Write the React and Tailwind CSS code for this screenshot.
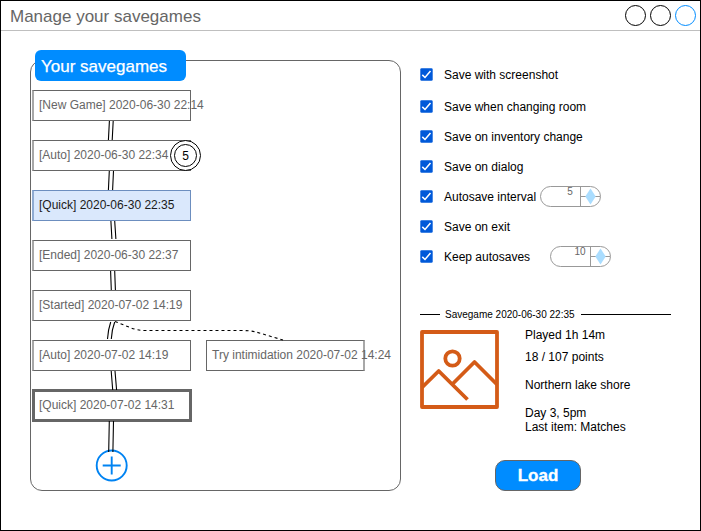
import React from "react";

const rows = [
  { text: "[New Game] 2020-06-30 22:14" },
  { text: "[Auto] 2020-06-30 22:34", badge: "5" },
  { text: "[Quick] 2020-06-30 22:35", kind: "selected" },
  { text: "[Ended] 2020-06-30 22:37" },
  { text: "[Started] 2020-07-02 14:19" },
  { text: "[Auto] 2020-07-02 14:19" },
  { text: "[Quick] 2020-07-02 14:31", kind: "current" },
];

const styles = {
  normal: "h-[31px] w-[159px] border border-l-2 border-y-[#666] border-r-[#666] border-l-[#a8a8a8] pl-[5px] text-[#666]",
  selected: "h-[31px] w-[159px] border border-l-2 border-y-[#6c8ebf] border-r-[#6c8ebf] border-l-[#8fabd2] bg-[#dae8fc] pl-[5px] text-[#1a1a1a]",
  current: "-my-px h-[33px] w-[160px] border-[3px] border-[#666] pl-[4px] text-[#666]",
};

function Save({ text, kind = "normal", badge }) {
  return (
    <div className={"relative flex shrink-0 items-center whitespace-nowrap pb-px text-[12px] " + styles[kind]}>
      {text}
      {badge && (
        <span className="absolute left-[136px] -top-[1px] flex size-[31px] items-center justify-center rounded-full border border-black bg-white text-black">
          <span className="absolute inset-[3px] rounded-full border border-black" />
          {badge}
        </span>
      )}
    </div>
  );
}

function Links() {
  return (
    <svg className="absolute -left-px -top-px h-[431px] w-[371px]" viewBox="30 60 371 431" fill="none" stroke="#000" strokeWidth="1.1">
      <path d="M109.4 121L108.4 140M113.2 121L112.2 140" />
      <path d="M109.3 171L108.4 190M113.5 171L112.6 190" />
      <path d="M110.9 221L111.9 239M114.7 221L115.9 239" />
      <path d="M110.6 271L111.3 290M114.7 271L115.4 290" />
      <path d="M110.7 322Q108 330 107.5 339M114.7 322Q111.7 330 111.3 339" />
      <path d="M111.2 371L112.7 390M115 371L116.6 390" />
      <path d="M109.3 421L108.7 452M113.5 421L112.9 452" />
      <path d="M115 321.5L130 327.5Q137 330.5 146 330.5H241Q250 330.5 256 332L283 340" strokeDasharray="3 3" />
    </svg>
  );
}

function Check() {
  return (
    <svg className="size-[13px] shrink-0" viewBox="0 0 13 13">
      <rect x="0.3" y="0.3" width="12.4" height="12.4" rx="1.3" fill="#0059d9" />
      <path d="M2.3 6.9L5 9.5L10.5 3" fill="none" stroke="#fff" strokeWidth="1.5" />
    </svg>
  );
}

function Spinner({ value, className }) {
  return (
    <div className={"flex h-[21px] w-[61px] overflow-hidden rounded-full border border-[#999] " + className}>
      <span className="flex-1 pl-[19px] text-center text-[10px] leading-[10px] text-[#666]">{value}</span>
      <svg className="h-[19px] w-[20px] shrink-0" viewBox="0 0 20 19">
        <path d="M0.5 0V19M0 9.5H20" stroke="#999" />
        <path d="M10.5 1.5L15.7 9.5L10.5 17.5L5.3 9.5Z" fill="#aaddff" />
      </svg>
    </div>
  );
}

function Option({ label, children, first }) {
  return (
    <div className={"flex items-center text-[12px] text-black " + (first ? "h-[34px]" : "h-[30px]")}>
      <Check />
      <span className="ml-[11px] whitespace-nowrap pt-[2px]">{label}</span>
      {children}
    </div>
  );
}

export default function App() {
  return (
    <div className="flex h-[531px] w-[701px] flex-col border border-black bg-white font-['Liberation_Sans',Arial,sans-serif]">
      <header className="flex h-[30px] shrink-0 items-center border-b border-[#bfbfbf] pl-[9px] pr-[4px] text-[17px] text-[#666]">
        <h1 className="flex-1 pt-[3px]">Manage your savegames</h1>
        <div className="flex gap-[4px]">
          <span className="size-[21px] rounded-full border border-black" />
          <span className="size-[21px] rounded-full border border-black" />
          <span className="size-[21px] rounded-full border border-[#008cff]" />
        </div>
      </header>
      <main className="flex">
        <section className="relative ml-[29px] mt-[29px] h-[431px] w-[371px] rounded-[12px] border border-[#666]">
          <h2 className="absolute left-[4px] -top-[11px] flex h-[31px] w-[151px] items-center rounded-[6px] bg-[#008cff] pl-[6px] pt-[2px] text-[17px] text-white [-webkit-text-stroke:0.25px_white]">
            Your savegames
          </h2>
          <div className="flex flex-col gap-[19px] pl-px pt-[29px]">
            {rows.map((r) => (
              <Save key={r.text} {...r} />
            ))}
          </div>
          <div className="absolute left-[175px] top-[279px] flex h-[31px] w-[159px] items-center whitespace-nowrap border border-r-2 border-y-[#666] border-l-[#666] border-r-[#a8a8a8] pb-px pl-[5px] text-[12px] text-[#666]">
            Try intimidation 2020-07-02 14:24
          </div>
          <svg className="absolute left-[64px] top-[388px] size-[33px]" viewBox="0 0 33 33" fill="none" stroke="#0083f2" strokeWidth="1.9">
            <circle cx="16.7" cy="16.5" r="15" />
            <path d="M16.7 7.5V25.5M7.7 16.5H25.7" />
          </svg>
          <Links />
        </section>
        <section className="ml-[19px] flex flex-col pt-[26px]">
          <div className="flex flex-col">
            <Option label="Save with screenshot" first />
            <Option label="Save when changing room" />
            <Option label="Save on inventory change" />
            <Option label="Save on dialog" />
            <Option label="Autosave interval"><Spinner value="5" className="ml-[4px]" /></Option>
            <Option label="Save on exit" />
            <Option label="Keep autosaves"><Spinner value="10" className="ml-[20px]" /></Option>
          </div>
          <div className="mt-[38px] flex h-[10px] w-[251px] items-center">
            <span className="h-px w-[20px] bg-black" />
            <span className="ml-[5px] mr-[6px] whitespace-nowrap pt-[2px] text-[10px] leading-[10px]">Savegame 2020-06-30 22:35</span>
            <span className="h-px flex-1 bg-black" />
          </div>
          <div className="mt-[9px] flex">
            <svg className="mt-[2px] size-[79px]" viewBox="0 0 79 79" fill="none" stroke="#d45b17" strokeWidth="3.8">
              <rect x="2" y="2" width="75" height="75" strokeLinejoin="round" />
              <circle cx="32.5" cy="28.5" r="7.2" />
              <path d="M2 57.5L18.7 41L47.5 69.5M32 54.5L54.5 32L77 54.5" strokeLinejoin="round" strokeLinecap="butt" />
            </svg>
            <div className="ml-[26px] text-[12px] leading-[14px]">
              <p>Played 1h 14m</p>
              <p className="mt-[8px]">18 / 107 points</p>
              <p className="mt-[14px]">Northern lake shore</p>
              <p className="mt-[14px]">Day 3, 5pm</p>
              <p>Last item: Matches</p>
            </div>
          </div>
          <button className="ml-[75px] mt-[26px] h-[31px] w-[86px] rounded-[10px] border border-[#666] bg-[#008cff] text-[17px] leading-[29px] font-bold text-white [-webkit-text-stroke:0.3px_white]">
            Load
          </button>
        </section>
      </main>
    </div>
  );
}
